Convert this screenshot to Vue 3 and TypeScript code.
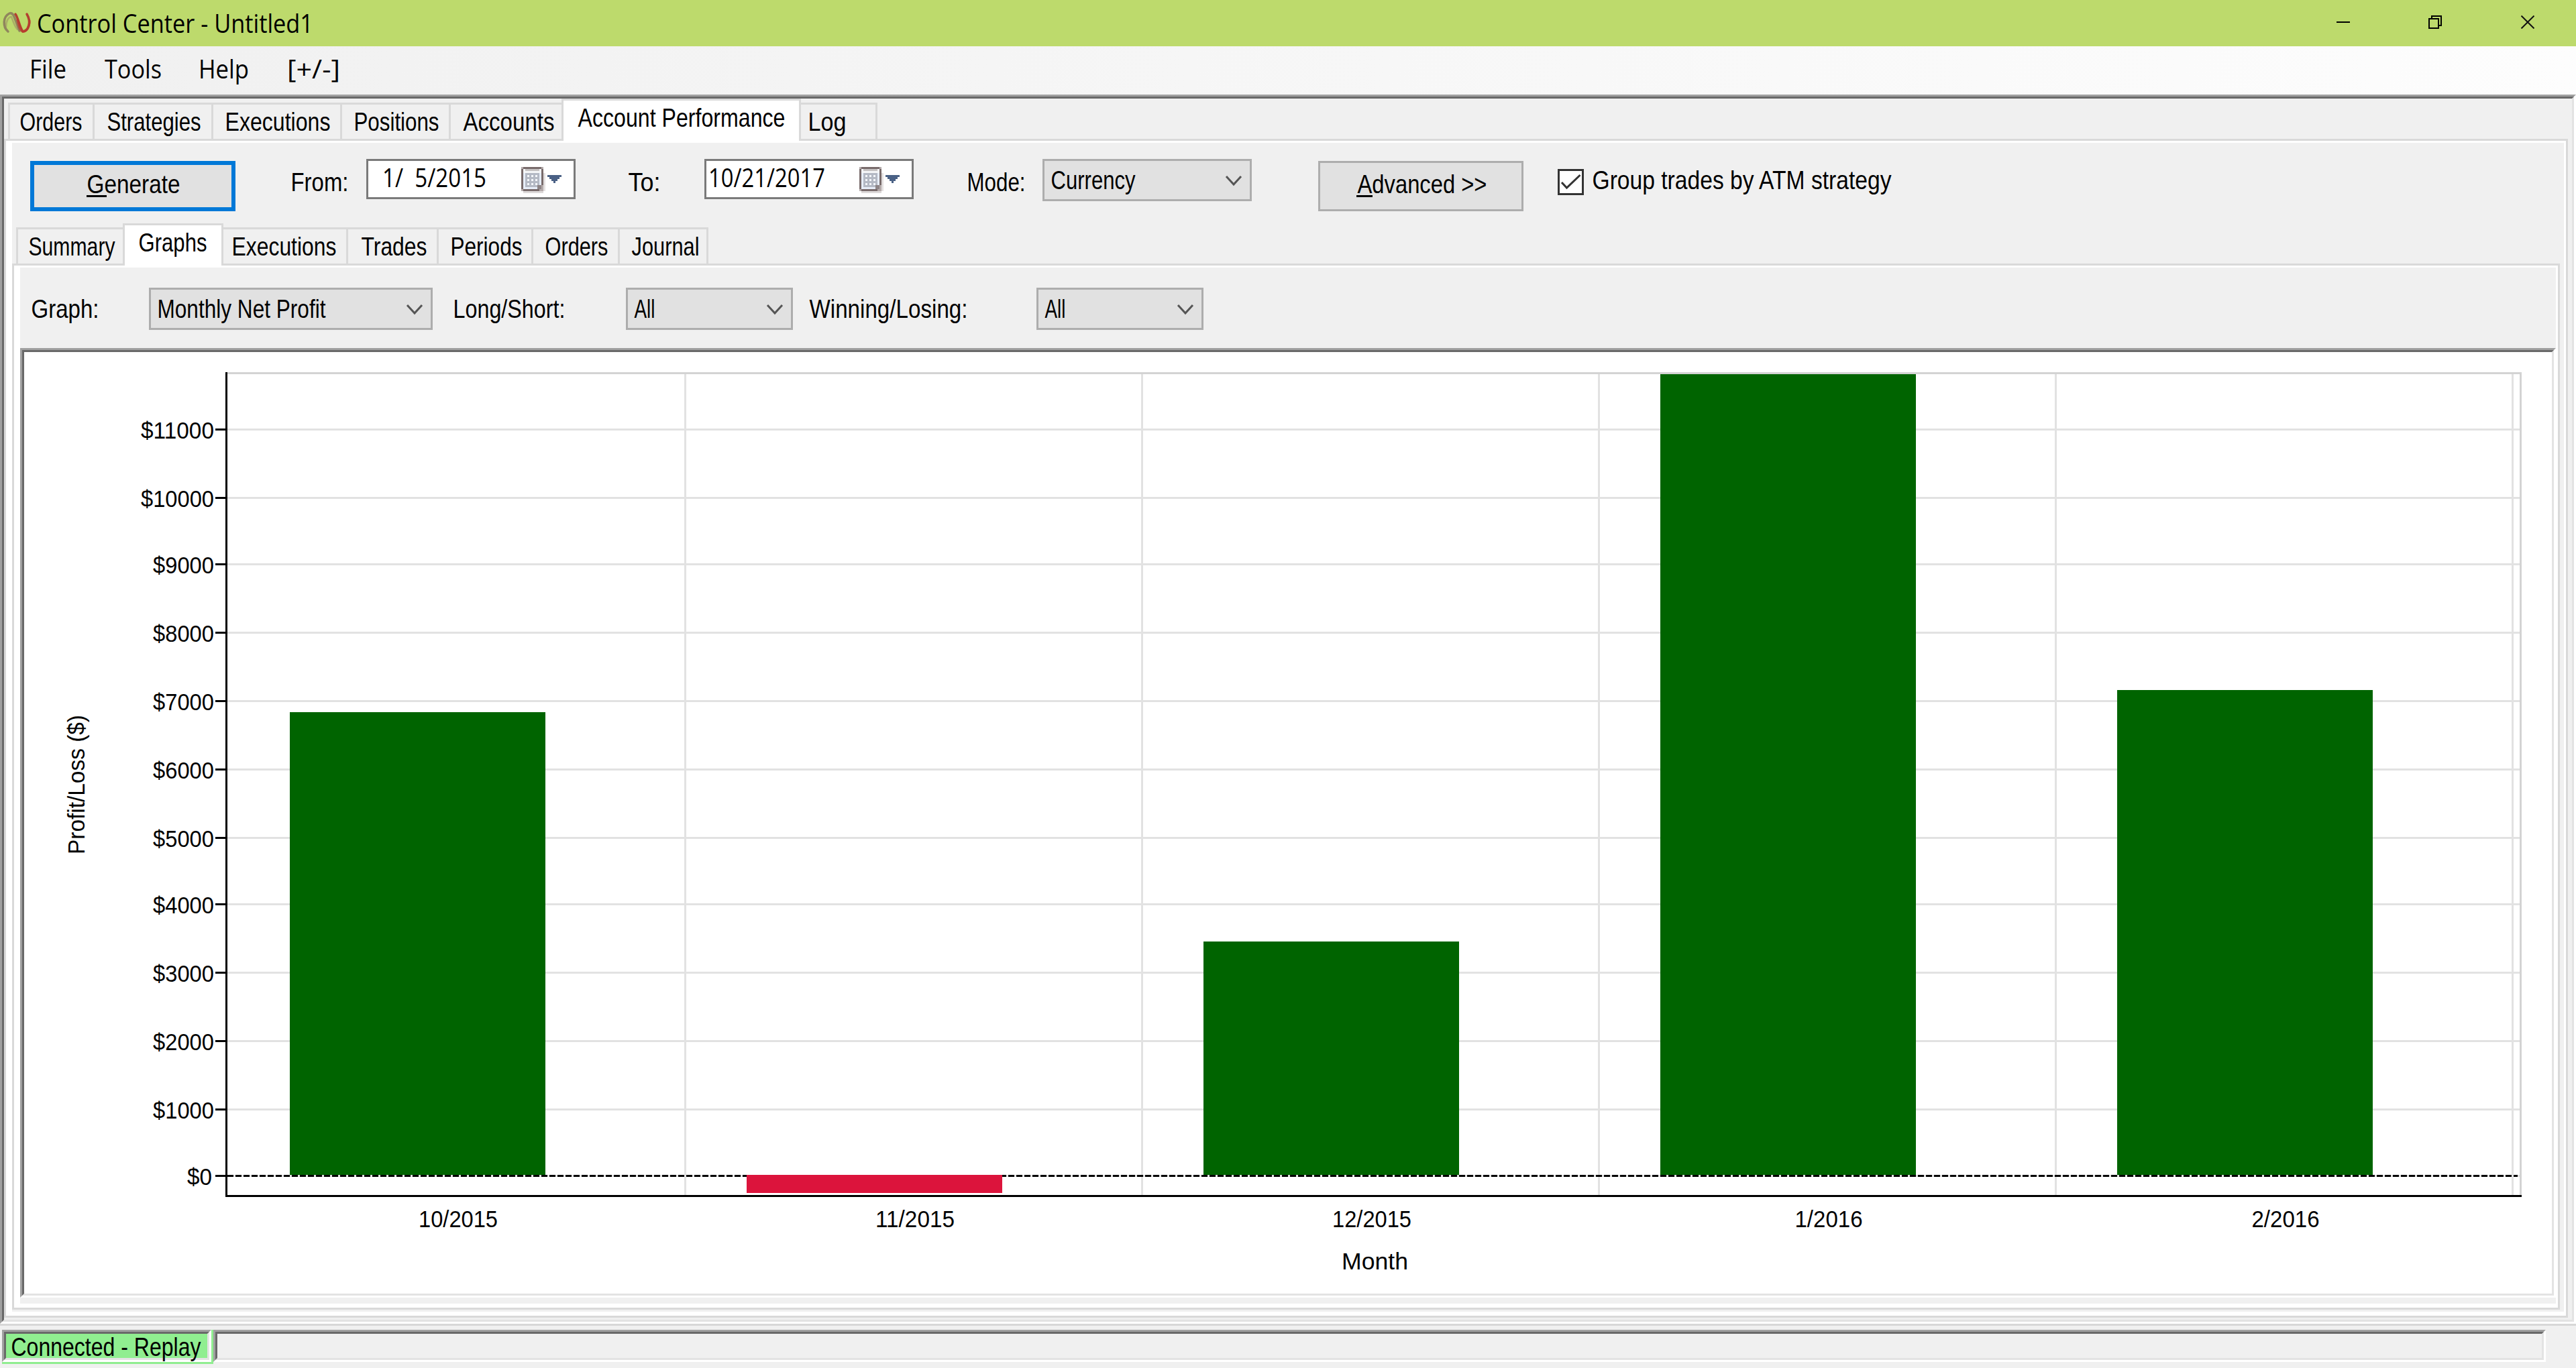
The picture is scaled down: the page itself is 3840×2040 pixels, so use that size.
<script setup lang="ts">
import { h, type FunctionalComponent } from 'vue'

interface LabelProps {
  text: string
  len: number
  face?: 'ui' | 'menu'
}

// A line of text fitted to a fixed advance; the box is exactly one cap height tall.
const stretch = { ui: 1.19, menu: 1.03 }
const Label: FunctionalComponent<LabelProps> = (p) => {
  const face = p.face ?? 'ui'
  const k = stretch[face]
  return h('svg', { class: ['label', face], width: p.len, height: 27 }, [
    h(
      'text',
      { x: face === 'ui' ? 1.5 : 0, y: 27 / k, transform: `scale(1 ${k})`, textLength: p.len - 1, lengthAdjust: 'spacingAndGlyphs' },
      p.text,
    ),
  ])
}
Label.props = ['text', 'len', 'face']

interface Tab {
  text: string
  width: number
  indent: number
  len: number
  active?: boolean
}

const mainTabs: Tab[] = [
  { text: 'Orders', width: 129, indent: 13, len: 94 },
  { text: 'Strategies', width: 177, indent: 17, len: 141 },
  { text: 'Executions', width: 192, indent: 16, len: 158 },
  { text: 'Positions', width: 162, indent: 16, len: 128 },
  { text: 'Accounts', width: 165, indent: 17, len: 137 },
  { text: 'Account Performance', width: 357, indent: 20, len: 310, active: true },
  { text: 'Log', width: 114, indent: 9, len: 58 },
]

const reportTabs: Tab[] = [
  { text: 'Summary', width: 159, indent: 14, len: 130 },
  { text: 'Graphs', width: 150, indent: 19, len: 103, active: true },
  { text: 'Executions', width: 186, indent: 11, len: 157 },
  { text: 'Trades', width: 135, indent: 18, len: 99 },
  { text: 'Periods', width: 141, indent: 16, len: 108 },
  { text: 'Orders', width: 129, indent: 16, len: 95 },
  { text: 'Journal', width: 132, indent: 16, len: 102 },
]

const menu = [
  { text: 'File', len: 56, gap: 44 },
  { text: 'Tools', len: 86, gap: 56 },
  { text: 'Help', len: 76, gap: 54 },
  { text: '[+/-]', len: 80, gap: 56 },
]

const ticks = [1752, 1653, 1551, 1449, 1347, 1248, 1146, 1044, 942, 840, 741, 639].map((y, i) => {
  const text = i === 0 ? '$0' : `$${i * 1000}`
  return { y, text, right: i === 0 ? 316 : 319, len: text.length * 18 + 1 }
})

const months = [
  { text: '10/2015', top: 1062, bottom: 1752, gain: true },
  { text: '11/2015', top: 1752, bottom: 1779, gain: false },
  { text: '12/2015', top: 1404, bottom: 1752, gain: true },
  { text: '1/2016', top: 558, bottom: 1752, gain: true },
  { text: '2/2016', top: 1029, bottom: 1752, gain: true },
].map((m, i) => ({ ...m, x: 432 + i * 681, center: 683 + i * 681, line: 1020 + i * 681, len: m.text.length * 17 - 1 }))

const calendarDots = [0, 1, 2].flatMap((r) => [0, 1, 2].map((c) => ({ x: 3 + c * 2, y: 4 + r * 2 })))
</script>

<template>
  <div class="window">
    <header class="titlebar">
      <svg class="logo" width="44" height="36" viewBox="0 0 44 36">
        <g fill="none" stroke-linecap="round">
          <path d="M8 31C0 24 0 9 10 4C15 2 17 8 19 14L25 30" stroke="#85705a" stroke-width="3.5" opacity=".8" />
          <path d="M5 24C5 15 9 9 13 9C15 14 17 22 22 28" stroke="#9b8a64" stroke-width="2.5" opacity=".55" />
          <path d="M19 5C23 10 25 24 30 31C39 30 43 17 36 5" stroke="#b0302a" stroke-width="3.5" opacity=".9" />
          <path d="M22 14C24 22 25 29 30 31C36 31 40 23 40 15" stroke="#b93a2e" stroke-width="3.5" opacity=".7" />
        </g>
      </svg>
      <Label class="title" text="Control Center - Untitled1" :len="413" face="menu" />
      <div class="caption-buttons">
        <svg width="20" height="20"><rect y="9" width="20" height="2" /></svg>
        <svg width="20" height="20" fill="none" stroke="#000" stroke-width="2">
          <path d="M1 5H15V19H1ZM5 5V1H19V15H15" />
        </svg>
        <svg width="20" height="20" fill="none" stroke="#111" stroke-width="2"><path d="M.5 .5L19.5 19.5M19.5 .5L.5 19.5" /></svg>
      </div>
    </header>

    <nav class="menubar">
      <Label v-for="m in menu" :key="m.text" :text="m.text" :len="m.len" face="menu" :style="{ marginLeft: m.gap + 'px' }" />
    </nav>

    <main class="sunken frame">
      <div class="sunken-inner frame-body">
        <div class="tabs">
          <div v-for="t in mainTabs" :key="t.text" class="tab" :class="{ active: t.active }" :style="{ width: t.width + 'px' }">
            <Label :text="t.text" :len="t.len" :style="{ marginLeft: t.indent + 'px' }" />
          </div>
        </div>
        <section class="page main-page">
          <div class="page-body">
            <div class="toolbar">
              <button class="push primary"><span class="mnemonic generate"><Label text="Generate" :len="140" /></span></button>
              <Label class="from" text="From:" :len="87" />
              <div class="date">
                <Label class="first" text="1/&#160;&#160;5/2015" :len="156" face="menu" />
                <svg class="calendar" width="60" height="42" viewBox="0 0 20 14" shape-rendering="crispEdges">
                  <rect x="1" y="12" width="10" height="1" fill="#ddd9d9" />
                  <rect x="11" y="3" width="1" height="9" fill="#e4e1e1" />
                  <rect x="0" y="0" width="11" height="12" fill="#b3aaaa" />
                  <path d="M1 0H10V1H11V9H10V11H9V12H1V11H0V1H1Z" fill="#786b6b" />
                  <rect x="1" y="1" width="9" height="10" fill="#e6edf8" />
                  <rect x="1" y="1" width="9" height="2" fill="#f4f5f7" />
                  <rect x="2" y="1" width="7" height="1" fill="#c5c2c2" />
                  <rect x="2" y="3" width="7" height="7" fill="#b4b9c4" />
                  <rect v-for="d in calendarDots" :key="`${d.x}-${d.y}`" :x="d.x" :y="d.y" width="1" height="1" fill="#f4f6fa" />
                  <rect x="8" y="9" width="2" height="2" fill="#8d8486" />
                  <path d="M13 4H20V5H19V6H18V7H17V8H16V7H15V6H14V5H13Z" fill="#4a6185" />
                </svg>
              </div>
              <Label class="to" text="To:" :len="49" />
              <div class="date">
                <Label class="second" text="10/21/2017" :len="175" face="menu" />
                <svg class="calendar" width="60" height="42" viewBox="0 0 20 14" shape-rendering="crispEdges">
                  <rect x="1" y="12" width="10" height="1" fill="#ddd9d9" />
                  <rect x="11" y="3" width="1" height="9" fill="#e4e1e1" />
                  <rect x="0" y="0" width="11" height="12" fill="#b3aaaa" />
                  <path d="M1 0H10V1H11V9H10V11H9V12H1V11H0V1H1Z" fill="#786b6b" />
                  <rect x="1" y="1" width="9" height="10" fill="#e6edf8" />
                  <rect x="1" y="1" width="9" height="2" fill="#f4f5f7" />
                  <rect x="2" y="1" width="7" height="1" fill="#c5c2c2" />
                  <rect x="2" y="3" width="7" height="7" fill="#b4b9c4" />
                  <rect v-for="d in calendarDots" :key="`${d.x}-${d.y}`" :x="d.x" :y="d.y" width="1" height="1" fill="#f4f6fa" />
                  <rect x="8" y="9" width="2" height="2" fill="#8d8486" />
                  <path d="M13 4H20V5H19V6H18V7H17V8H16V7H15V6H14V5H13Z" fill="#4a6185" />
                </svg>
              </div>
              <Label class="mode" text="Mode:" :len="88" />
              <div class="combo currency">
                <Label text="Currency" :len="127" />
                <svg class="chevron" width="26" height="18"><path d="M2 2L13 14L24 2" /></svg>
              </div>
              <button class="push advanced"><span class="mnemonic adv"><Label text="Advanced &gt;&gt;" :len="194" /></span></button>
              <div class="checkbox">
                <svg width="33" height="33"><path d="M3 17L10.500 25L30.500 6" /></svg>
              </div>
              <Label class="group" text="Group trades by ATM strategy" :len="447" />
            </div>

            <div class="tabs">
              <div v-for="t in reportTabs" :key="t.text" class="tab" :class="{ active: t.active }" :style="{ width: t.width + 'px' }">
                <Label :text="t.text" :len="t.len" :style="{ marginLeft: t.indent + 'px' }" />
              </div>
            </div>
            <section class="page report-page">
              <div class="page-body">
                <div class="filters">
                  <Label class="graph" text="Graph:" :len="102" />
                  <div class="combo wide">
                    <Label text="Monthly Net Profit" :len="252" />
                    <svg class="chevron" width="26" height="18"><path d="M2 2L13 14L24 2" /></svg>
                  </div>
                  <Label class="long-short" text="Long/Short:" :len="168" />
                  <div class="combo side">
                    <Label text="All" :len="32" />
                    <svg class="chevron" width="26" height="18"><path d="M2 2L13 14L24 2" /></svg>
                  </div>
                  <Label class="win-lose" text="Winning/Losing:" :len="237" />
                  <div class="combo outcome">
                    <Label text="All" :len="32" />
                    <svg class="chevron" width="26" height="18"><path d="M2 2L13 14L24 2" /></svg>
                  </div>
                </div>

                <div class="sunken chart-frame">
                  <div class="sunken-inner chart-body">
                    <svg class="chart" width="3768" height="1404" viewBox="36 525 3768 1404">
                      <g fill="#e2e2e2">
                        <rect v-for="t in ticks" :key="t.y" x="339" :y="t.y" width="3417" height="3" />
                        <rect v-for="m in months" :key="m.line" :x="m.line" y="558" width="3" height="1224" />
                      </g>
                      <path d="M339 556.500H3757.500V1782" fill="none" stroke="#d3d3d3" stroke-width="3" />
                      <path d="M339 1753.500H3753" stroke="#000" stroke-width="3" stroke-dasharray="9 3" />
                      <rect
                        v-for="m in months"
                        :key="m.text"
                        :x="m.x"
                        :y="m.top"
                        width="381"
                        :height="m.bottom - m.top"
                        :fill="m.gain ? '#006400' : '#dc143c'"
                      />
                      <rect x="336" y="555" width="3" height="1230" />
                      <rect x="336" y="1782" width="3423" height="3" />
                      <g class="axis-text">
                        <g v-for="t in ticks" :key="t.text">
                          <rect x="321" :y="t.y" width="15" height="3" />
                          <text :x="t.right - t.len" :y="t.y + 15" :textLength="t.len" lengthAdjust="spacingAndGlyphs">{{ t.text }}</text>
                        </g>
                        <text
                          v-for="m in months"
                          :key="m.text"
                          :x="m.center - m.len / 2"
                          y="1830"
                          :textLength="m.len"
                          lengthAdjust="spacingAndGlyphs"
                        >{{ m.text }}</text>
                        <text x="2000" y="1893" textLength="99" lengthAdjust="spacingAndGlyphs">Month</text>
                        <text transform="translate(126 1274) rotate(-90)" textLength="208" lengthAdjust="spacingAndGlyphs">Profit/Loss ($)</text>
                      </g>
                    </svg>
                  </div>
                </div>
              </div>
            </section>
          </div>
        </section>
      </div>
    </main>

    <footer class="statusbar">
      <div class="status-edge">
        <div class="sunken status-cell">
          <div class="sunken-inner status-text"><Label text="Connected - Replay" :len="284" /></div>
        </div>
      </div>
      <div class="sunken status-rest"><div class="sunken-inner status-fill"></div></div>
    </footer>
  </div>
</template>

<style>
html,
body {
  margin: 0;
  background: #f0f0f0;
}
.label {
  display: block;
  flex: none;
  overflow: visible;
}
.label.ui {
  font: 33px 'Liberation Sans', Arial, sans-serif;
}
.label.menu {
  font: 36.500px 'Open Sans', 'Segoe UI', sans-serif;
}
</style>

<style scoped>
.window,
.window * {
  box-sizing: border-box;
}
.window {
  display: flex;
  flex-direction: column;
  width: 3840px;
  height: 2040px;
  overflow: hidden;
  background: #f0f0f0;
}
svg {
  display: block;
  flex: none;
}
.titlebar {
  display: flex;
  flex: none;
  height: 69px;
  background: #bdda6c;
}
.logo {
  margin: 16px 0 0 4px;
}
.title {
  margin: 22px 0 0 7px;
}
.caption-buttons {
  display: flex;
  gap: 118px;
  margin: 23px 62px 0 auto;
}
.caption-buttons svg:nth-child(2) {
  margin-left: -1px;
}
.menubar {
  display: flex;
  flex: none;
  height: 72px;
  padding-top: 21px;
  background: linear-gradient(90deg, #f0f0f0, #fdfdfd);
}
.sunken {
  border: 3px solid;
  border-color: #a0a0a0 #fff #fff #a0a0a0;
}
.sunken-inner {
  height: 100%;
  border: 3px solid;
  border-color: #696969 #e3e3e3 #e3e3e3 #696969;
}
.frame {
  flex: none;
  height: 1833px;
}
.frame-body {
  display: flex;
  flex-direction: column;
}
.tabs {
  display: flex;
  flex: none;
  align-items: flex-end;
  height: 60px;
  padding-left: 6px;
}
.tab {
  flex: none;
  height: 54px;
  padding-top: 12px;
  border-top: 3px solid #d9d9d9;
  border-right: 3px solid #d9d9d9;
}
.tab:first-child {
  border-left: 3px solid #d9d9d9;
}
.tab:has(+ .active) {
  border-right: 0;
}
.tab.active {
  z-index: 1;
  height: 63px;
  margin-bottom: -3px;
  border-left: 3px solid #d9d9d9;
  background: #fff;
}
.page {
  flex: none;
  padding: 3px 3px 6px 9px;
  border: 3px solid #d9d9d9;
  background: #fff;
}
.main-page {
  width: 3822px;
  height: 1758px;
}
.report-page {
  width: 3798px;
  height: 1560px;
}
.page-body {
  display: flex;
  flex-direction: column;
  height: 100%;
  background: #f0f0f0;
}
.toolbar,
.filters {
  display: flex;
  flex: none;
  align-items: flex-start;
  height: 120px;
}
.push {
  display: flex;
  flex: none;
  justify-content: flex-start;
  align-items: flex-start;
  width: 306px;
  height: 75px;
  margin-top: 27px;
  padding: 0;
  border: 3px solid #adadad;
  border-radius: 0;
  background: #e1e1e1;
}
.primary {
  margin-left: 27px;
  border: 6px solid #0078d7;
}
.mnemonic {
  display: block;
  height: 33px;
  background: linear-gradient(#000, #000) 0 30px no-repeat;
}
.generate {
  margin: 15px 0 0 77px;
  background-size: 30px 3px;
  background-position: 1px 30px;
}
.adv {
  margin: 18px 0 0 54px;
  background-size: 24px 3px;
}
.advanced {
  margin-left: 99px;
}
.from {
  margin: 45px 27px 0 81px;
}
.to {
  margin: 45px 66px 0 77px;
}
.mode {
  margin: 45px 26px 0 78px;
}
.group {
  margin: 42px 0 0 11px;
}
.date {
  display: flex;
  flex: none;
  width: 312px;
  height: 60px;
  margin-top: 24px;
  border: 3px solid #7a7a7a;
  background: #fff;
}
.date .label {
  margin-top: 12px;
}
.date .first {
  margin-left: 21px;
}
.date .second {
  margin-left: 3px;
}
.calendar {
  margin: 9px 18px 0 auto;
}
.combo {
  display: flex;
  flex: none;
  align-items: flex-start;
  height: 63px;
  padding-left: 8px;
  border: 3px solid #adadad;
  background: #e1e1e1;
}
.combo .label {
  margin-top: 15px;
}
.chevron {
  margin: 21px 11px 0 auto;
  fill: none;
  stroke: #555;
  stroke-width: 3;
}
.currency {
  width: 312px;
  margin-top: 24px;
}
.filters .combo {
  margin-top: 30px;
}
.wide {
  width: 423px;
}
.side,
.outcome {
  width: 249px;
}
.graph {
  margin: 48px 75px 0 15px;
}
.long-short {
  margin: 48px 91px 0 29px;
}
.win-lose {
  margin: 48px 103px 0 23px;
}
.checkbox {
  flex: none;
  width: 39px;
  height: 39px;
  margin: 39px 0 0 51px;
  border: 3px solid #333;
  background: #fff;
}
.checkbox path {
  fill: none;
  stroke: #333;
  stroke-width: 3;
}
.chart-frame {
  flex: none;
  height: 1416px;
}
.chart-body {
  background: #fff;
}
.axis-text {
  font: 34.500px 'Liberation Sans', Arial, sans-serif;
}
.statusbar {
  display: flex;
  flex: none;
  align-items: flex-start;
  height: 66px;
  padding: 6px 0 0 3px;
  border-top: 3px solid #d7d7d7;
}
.status-edge {
  flex: none;
  width: 315px;
  height: 51px;
  padding: 0 3px 3px 0;
  background: #90ee90;
}
.status-cell,
.status-rest {
  height: 48px;
}
.status-text {
  padding: 6px 0 0 6px;
  background: #90ee90;
}
.status-rest {
  flex: none;
  width: 3477px;
}
</style>
